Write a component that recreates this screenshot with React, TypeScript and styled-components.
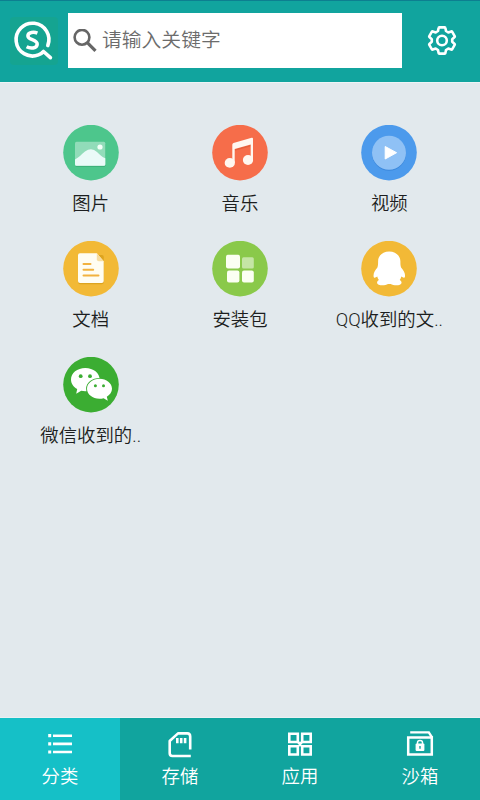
import React from 'react';
import styled, { createGlobalStyle } from 'styled-components';

const GlobalStyle = createGlobalStyle`
  * { box-sizing: border-box; }
  body { margin: 0; font-family: Roboto, "Noto Sans CJK SC", sans-serif; }
`;

const Screen = styled.div`
  display: flex;
  flex-direction: column;
  height: 800px;
  width: 480px;
  overflow: hidden;
  background: #e2e9ed;
`;

const Header = styled.header`
  display: flex;
  flex: none;
  height: 82px;
  padding: 12px 22px 0 10px;
  border-top: 1px solid #0d7f90;
  background: #11a49e;
`;

const Logo = styled.svg`
  flex: none;
  width: 48px;
  height: 48px;
  margin: 4px 10px 0 0;
`;

const SearchBox = styled.label`
  display: flex;
  align-items: center;
  width: 333.5px;
  height: 55px;
  padding-left: 5px;
  background: #fff;
`;

const SearchIcon = styled.svg`
  flex: none;
  width: 24px;
  height: 24px;
  margin-right: 5px;
`;

const SearchInput = styled.input`
  flex: 1;
  min-width: 0;
  height: 30px;
  padding: 0;
  border: 0;
  outline: 0;
  background: transparent;
  font: 350 19.8px Roboto, "Noto Sans CJK SC", sans-serif;
  &::placeholder { color: #6c6c6c; opacity: 1; }
`;

const SettingsButton = styled.button`
  display: flex;
  width: 30px;
  height: 30px;
  margin: 12px 0 0 25.5px;
  padding: 0;
  border: 0;
  background: none;
`;

const Content = styled.main`
  flex: 1;
  padding: 41.5px 16px 0;
  border-top: 1px solid #edf4f6;
  border-bottom: 1px solid #eaf0f3;
`;

const CategoryGrid = styled.div`
  display: grid;
  grid-template-columns: repeat(3, 1fr);
  grid-auto-rows: 116px;
`;

const Category = styled.div`
  display: flex;
  flex-direction: column;
  align-items: center;
`;

const CategoryIcon = styled.svg`
  flex: none;
  width: 56px;
  height: 56px;
`;

const CategoryLabel = styled.span`
  margin-top: 9px;
  line-height: 28px;
  font-size: 18.4px;
  font-weight: 350;
  white-space: nowrap;
  color: #1c1e20;
`;

const TabBar = styled.nav`
  display: grid;
  flex: none;
  grid-template-columns: repeat(4, 1fr);
  height: 82px;
`;

const Tab = styled.button<{ $active?: boolean }>`
  display: flex;
  flex-direction: column;
  align-items: center;
  padding: 10px 0 0;
  border: 0;
  background: ${(p) => (p.$active ? '#15c0c7' : '#11a49e')};
  color: #fff;
  font: 350 18.4px Roboto, "Noto Sans CJK SC", sans-serif;
`;

const TabIcon = styled.svg`
  flex: none;
  width: 32px;
  height: 32px;
  fill: none;
  stroke: #fff;
`;

const TabLabel = styled.span`
  margin-top: 3px;
  line-height: 28px;
`;

const categories = [
  {
    name: '图片',
    color: '#4dc68c',
    art: (
      <>
        <rect x="12.3" y="18" width="30" height="24" rx="1.5" fill="#3db17a" />
        <rect x="12" y="16.7" width="30.3" height="24" rx="1.5" fill="#91dcb9" />
        <path d="M12 34.5C16 32.5 18 29.5 22 26.5Q28.5 21.8 34 27C37 30 39 32 42.3 33.2V39.2Q42.3 40.7 40.8 40.7H13.5Q12 40.7 12 39.2Z" fill="#eafaf8" />
        <circle cx="37" cy="22" r="2.6" fill="#f3fff8" />
      </>
    ),
  },
  {
    name: '音乐',
    color: '#f66d4a',
    art: (
      <>
        <path d="M22.8 24.3L39 19.8V21.2L22.8 25.8Z" fill="#e4603c" />
        <path d="M20.3 19.8Q20.3 18.5 21.5 18.1L39.7 12.8Q41 12.5 41 13.8V35.2H38.7V19.5L22.7 24V38H20.3Z" fill="#fff7f0" />
        <ellipse cx="17.8" cy="37.9" rx="5.1" ry="4.9" fill="#fff7f0" />
        <ellipse cx="36" cy="35" rx="5.1" ry="4.9" fill="#fff7f0" />
      </>
    ),
  },
  {
    name: '视频',
    color: '#4c9aec',
    art: (
      <>
        <circle cx="28" cy="28.7" r="17" fill="#3b88dc" />
        <circle cx="28" cy="27.7" r="17" fill="#8fc1f5" />
        <path d="M24.2 21.5L35.6 27.7L24.2 34Z" fill="#fff" stroke="#fff" strokeLinejoin="round" />
      </>
    ),
  },
  {
    name: '文档',
    color: '#f2b936',
    art: (
      <>
        <rect x="15.2" y="14" width="25.6" height="29.2" rx="2" fill="#dda41f" />
        <path d="M17 12.3H33.8L40.7 20.3V40Q40.7 42 38.7 42H17Q15 42 15 40V14.3Q15 12.3 17 12.3Z" fill="#fffdf2" />
        <path d="M33.8 12.3L40.7 20.3H35.8Q33.8 20.3 33.8 18.3Z" fill="#f8dda0" />
        <path d="M20.5 23H27.5M20.5 28.7H30.2M20.5 34.4H35.5" stroke="#f2b23f" strokeWidth="2" strokeLinecap="round" />
      </>
    ),
  },
  {
    name: '安装包',
    color: '#8ac94a',
    art: (
      <g fill="#fbfff2">
        <rect x="14" y="13.8" width="14" height="13.8" rx="2" />
        <rect x="30" y="16.3" width="11.8" height="11.3" rx="1.5" fill="#c5e5a5" />
        <rect x="15" y="29.4" width="12.4" height="12" rx="2" />
        <rect x="30" y="29.4" width="11.8" height="12" rx="2" />
      </g>
    ),
  },
  {
    name: 'QQ收到的文..',
    color: '#f2b936',
    art: (
      <path
        d="M28.2 10.4C21.7 10.4 17.1 14.6 17.1 20.2C17.1 22.6 17.1 24.2 16.4 26.6C13.9 29.4 12.2 32.6 12.6 35.4C12.8 37.4 14.4 37 16.3 35.6C16.5 37.2 17.2 38.2 17.9 39C15.6 40.2 15.4 42.6 17.7 43.7C20.5 44.8 25 44.2 27 43H29.6C32 44.2 35.9 44.8 38.9 43.7C41.2 42.6 41 40.2 38.7 39C39.4 38.2 40 37.2 40.3 35.6C42.2 37 43.7 37.4 44 35.4C44.4 32.6 42.6 29.4 40.1 26.6C39.4 24.2 39.4 22.6 39.4 20.2C39.2 14.6 34.7 10.4 28.2 10.4Z"
        fill="#fff"
      />
    ),
  },
  {
    name: '微信收到的..',
    color: '#3bad32',
    art: (
      <>
        <path d="M22.3 11C14.2 11 8 16.1 8 22.5C8 26.5 10.5 30 14.2 32.1L13.2 36.8L18.2 33.7C19.6 34 20.8 34.2 22.3 34.2C30.4 34.2 36.7 29 36.7 22.5C36.7 16.1 30.4 11 22.3 11Z" fill="#fff" />
        <path d="M36.5 21.8C29.6 21.8 24 26.2 24 31.8C24 37.4 29.6 41.8 36.5 41.8C38 41.8 39.2 41.6 40.6 41.2L44.8 43.7L43.8 39.7C47 37.8 49 35 49 31.8C49 26.2 43.4 21.8 36.5 21.8Z" fill="#fff" stroke="#3bad32" strokeWidth="1.8" paintOrder="stroke" />
        <g fill="#3bad32">
          <circle cx="17.7" cy="19.2" r="1.9" />
          <circle cx="27" cy="19.2" r="1.9" />
          <circle cx="32.4" cy="28.8" r="1.5" />
          <circle cx="40.5" cy="28.8" r="1.5" />
        </g>
      </>
    ),
  },
];

const tabs = [
  {
    name: '分类',
    art: (
      <>
        <path d="M9 7.7H28M9 15.9H28M9 24H28" strokeWidth="2.6" />
        <path d="M4.2 7.7H7.2M4.2 15.9H7.2M4.2 24H7.2" strokeWidth="3.2" />
      </>
    ),
  },
  {
    name: '存储',
    art: (
      <>
        <path d="M26.2 21.5V8.5Q26.2 5.4 23.4 5.4H14L5.7 13V25.3Q5.7 28 8.4 28H26.8" strokeWidth="2.6" strokeLinejoin="round" />
        <path d="M13.3 10V15.2M17.2 10V15.2M21.1 10V15.2" strokeWidth="2.6" />
      </>
    ),
  },
  {
    name: '应用',
    art: <path d="M5.3 5.7H13.8V14H5.3ZM18.2 5.7H26.7V14H18.2ZM5.3 18.3H13.8V26.5H5.3ZM18.2 18.3H26.7V26.5H18.2ZM14 14L18 18.2M18 14L14 18.2" strokeWidth="2.6" />,
  },
  {
    name: '沙箱',
    art: (
      <>
        <path d="M4.2 9.6H27.8V26.4H4.2Z" strokeWidth="2.5" />
        <path d="M6.2 4.4H24.8L28.2 9.6" strokeWidth="2.4" />
        <rect x="11.6" y="15.5" width="8.8" height="7.5" rx="1" fill="#fff" stroke="none" />
        <path d="M13.5 16V14.6Q13.5 12.4 16 12.4Q18.5 12.4 18.5 14.6V16" strokeWidth="1.5" />
        <path d="M16 18V20.8" stroke="#11a49e" strokeWidth="1.4" />
      </>
    ),
  },
];

export default function App() {
  return (
    <>
      <GlobalStyle />
      <Screen>
        <Header>
          <Logo viewBox="0 0 48 48" fill="none" stroke="#fff">
            <rect width="48" height="48" rx="4" fill="#18a58b" fillOpacity=".65" stroke="none" />
            <path d="M37.8 28.5A16.4 16.4 0 1 0 28.4 37.9Q31.5 36.8 33.5 34.5L40.4 40.7" strokeWidth="3.6" strokeLinecap="round" strokeLinejoin="round" />
            <path d="M27.4 16.1C24.3 14.8 17.9 14.8 17.9 19C17.9 23.1 27.2 22.2 27.2 27C27.2 31.7 20.2 31.8 16.6 29.8" strokeWidth="3.5" />
          </Logo>
          <SearchBox>
            <SearchIcon viewBox="0 0 24 24" fill="none" stroke="#666">
              <circle cx="9" cy="8.3" r="7.4" strokeWidth="2.6" />
              <path d="M14.3 13.6L22.5 21.8" strokeWidth="3.2" />
            </SearchIcon>
            <SearchInput placeholder="请输入关键字" />
          </SearchBox>
          <SettingsButton aria-label="设置">
            <svg width="30" height="30" viewBox="0 0 30 30" fill="none" stroke="#fff" strokeWidth="2.6" strokeLinejoin="round">
              <path d="M12.3 2.4H17.7Q18.3 2.4 18.4 3L19 6L21.3 7.4L24.2 6.4Q24.8 6.2 25.1 6.7L27.7 11.2Q28 11.7 27.6 12.1L25.2 14.2V16.8L27.6 18.9Q28 19.3 27.7 19.8L25.1 24.3Q24.8 24.8 24.2 24.6L21.3 23.6L19 25L18.4 28Q18.3 28.6 17.7 28.6H12.3Q11.7 28.6 11.6 28L11 25L8.7 23.6L5.8 24.6Q5.2 24.8 4.9 24.3L2.3 19.8Q2 19.3 2.4 18.9L4.8 16.8V14.2L2.4 12.1Q2 11.7 2.3 11.2L4.9 6.7Q5.2 6.2 5.8 6.4L8.7 7.4L11 6L11.6 3Q11.7 2.4 12.3 2.4Z" />
              <circle cx="15" cy="15.5" r="4.8" />
            </svg>
          </SettingsButton>
        </Header>
        <Content>
          <CategoryGrid>
            {categories.map((c) => (
              <Category key={c.name}>
                <CategoryIcon viewBox="0 0 56 56">
                  <circle cx="28" cy="27.6" r="27.8" fill={c.color} />
                  {c.art}
                </CategoryIcon>
                <CategoryLabel>{c.name}</CategoryLabel>
              </Category>
            ))}
          </CategoryGrid>
        </Content>
        <TabBar>
          {tabs.map((t, i) => (
            <Tab key={t.name} $active={i === 0}>
              <TabIcon viewBox="0 0 32 32">{t.art}</TabIcon>
              <TabLabel>{t.name}</TabLabel>
            </Tab>
          ))}
        </TabBar>
      </Screen>
    </>
  );
}
